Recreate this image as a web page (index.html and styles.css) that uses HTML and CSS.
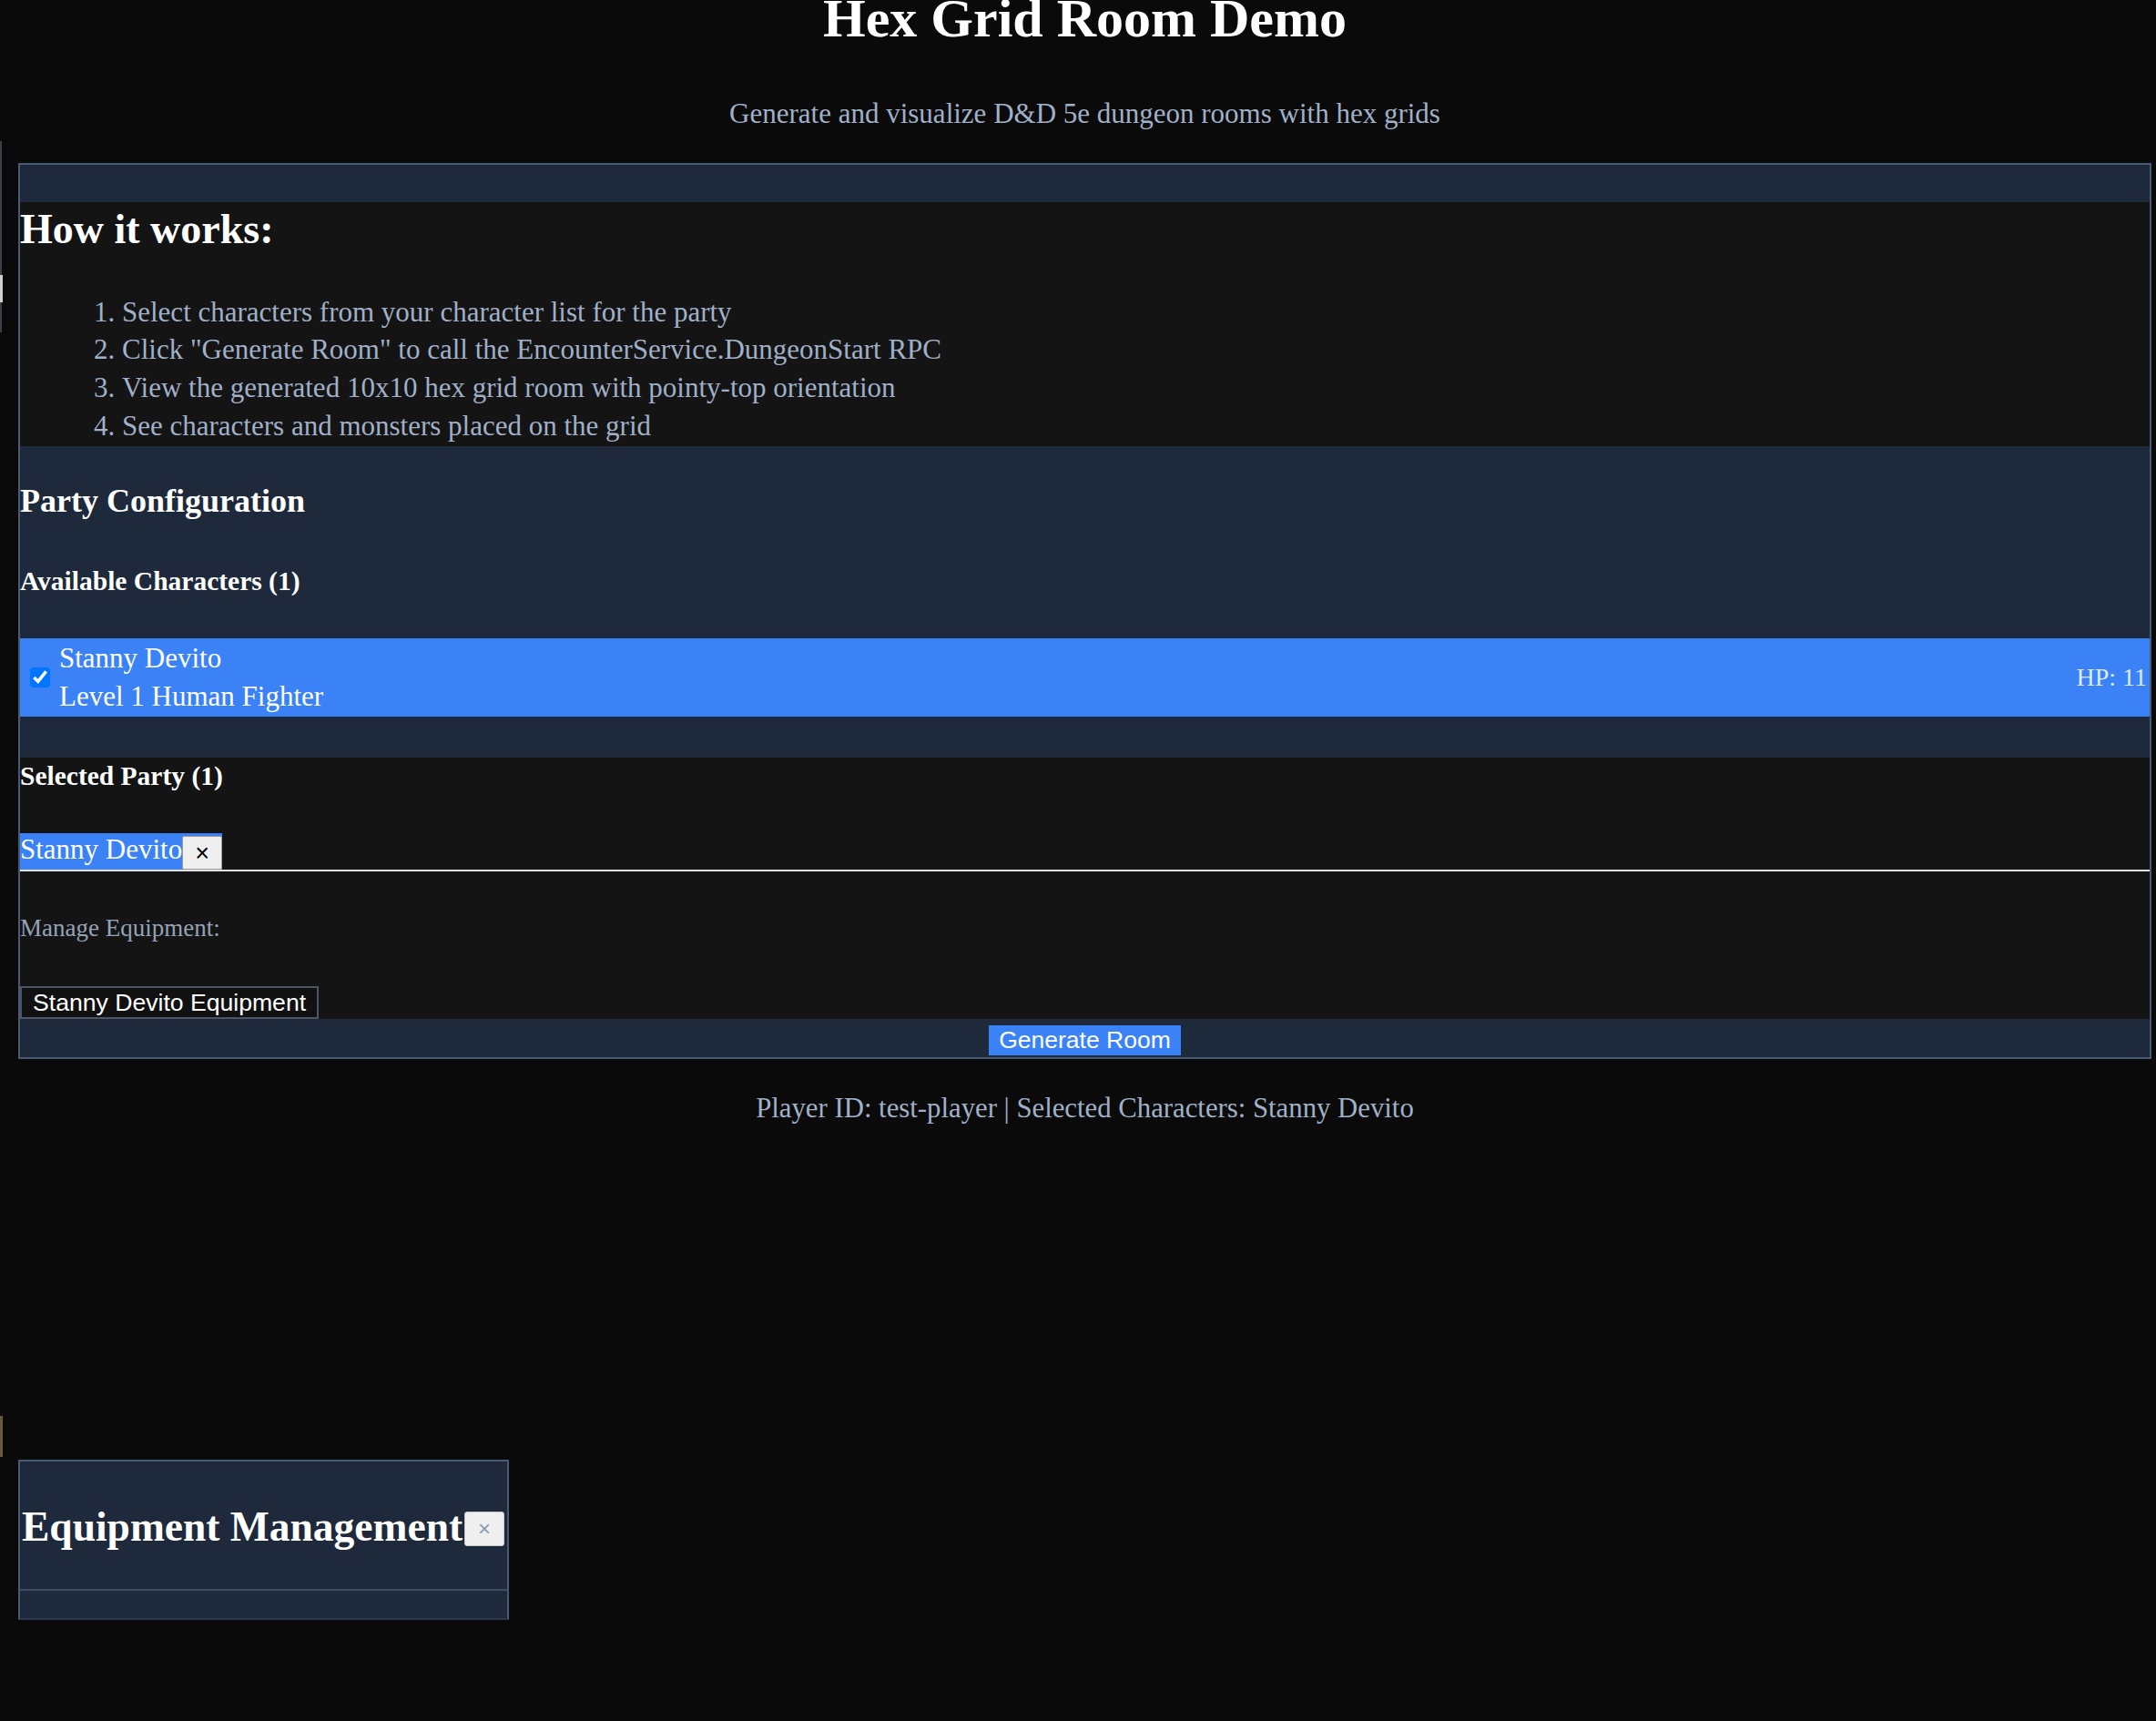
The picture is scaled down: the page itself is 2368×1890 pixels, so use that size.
FILE: index.html
```html
<!DOCTYPE html>
<html lang="en">
<head>
<meta charset="utf-8">
<title>Hex Grid Room Demo</title>
<link rel="stylesheet" href="styles.css">
</head>
<body>
<div class="edge edge-a"></div>
<div class="edge edge-b"></div>
<div class="edge edge-c"></div>
<div class="page">
  <header class="hero">
    <h1 class="title">Hex Grid Room Demo</h1>
    <p class="subtitle">Generate and visualize D&amp;D 5e dungeon rooms with hex grids</p>
  </header>

  <section class="panel">
    <div class="panel-top"></div>

    <div class="how">
      <h2 class="how-title">How it works:</h2>
      <ol class="steps">
        <li>Select characters from your character list for the party</li>
        <li>Click "Generate Room" to call the EncounterService.DungeonStart RPC</li>
        <li>View the generated 10x10 hex grid room with pointy-top orientation</li>
        <li>See characters and monsters placed on the grid</li>
      </ol>
    </div>

    <div class="party">
      <h3 class="party-title">Party Configuration</h3>
      <h4 class="sub-title">Available Characters (1)</h4>
      <label class="char-row">
        <input type="checkbox" class="char-check" checked>
        <span class="char-info">
          <span class="char-name">Stanny Devito</span>
          <span class="char-desc">Level 1 Human Fighter</span>
        </span>
        <span class="char-hp">HP: 11</span>
      </label>
    </div>

    <div class="selected">
      <h4 class="sub-title selected-title">Selected Party (1)</h4>
      <div class="chips">
        <span class="chip"><span class="chip-name">Stanny Devito</span><button class="chip-remove">×</button></span>
      </div>
      <p class="manage-label">Manage Equipment:</p>
      <button class="equip-btn">Stanny Devito Equipment</button>
    </div>

    <div class="actions">
      <button class="generate-btn">Generate Room</button>
    </div>
  </section>

  <p class="status">Player ID: test-player | Selected Characters: Stanny Devito</p>

  <div class="room-area"></div>

  <div class="modal">
    <div class="modal-header">
      <h2 class="modal-title">Equipment Management</h2>
      <button class="modal-close">×</button>
    </div>
    <div class="modal-body"></div>
  </div>
</div>
</body>
</html>
```

FILE: styles.css
```css
html, body {
  margin: 0;
  padding: 0;
  background: #0a0a0a;
}

body {
  font-family: "Liberation Serif", "Times New Roman", serif;
  color: #ffffff;
  height: 1890px;
  overflow: hidden;
  position: relative;
}

.edge {
  position: absolute;
  left: 0;
}
.edge-a { top: 155px; width: 2px; height: 210px; background: #3a3f48; }
.edge-b { top: 302px; width: 3px; height: 30px; background: #cfcfcf; }
.edge-c { top: 1555px; width: 3px; height: 45px; background: #6b5a3a; }

.page {
  margin-left: 20px;
  width: 2343px;
}

.hero {
  text-align: center;
}

.title {
  margin: 0;
  font-size: 60px;
  line-height: 40px;
  font-weight: 700;
  color: #ffffff;
}

.subtitle {
  margin: 63.5px 0 0;
  font-size: 31px;
  line-height: 42px;
  color: #a0b0c8;
}

.panel {
  margin-top: 33.5px;
  border: 2px solid #4a5a72;
  background: #1e293b;
}

.panel-top {
  height: 41px;
  background: #1e293b;
}

.how {
  background: #141414;
  padding: 2px 0 1.6px;
}

.how-title {
  margin: 0;
  font-size: 46px;
  line-height: 56px;
  font-weight: 700;
}

.steps {
  margin: 41.7px 0 0;
  padding: 0 0 0 81px;
  list-style-position: inside;
  font-size: 31px;
  line-height: 41.67px;
  color: #a0b0c8;
}

.party {
  background: #1e293b;
  padding: 37.85px 0 45px;
}

.party-title {
  margin: 0;
  font-size: 36px;
  line-height: 44px;
  font-weight: 700;
}

.sub-title {
  margin: 49.2px 0 0;
  font-size: 29.5px;
  line-height: 35px;
  font-weight: 700;
}

.char-row {
  margin-top: 45px;
  display: flex;
  align-items: center;
  background: #3b82f6;
  padding: 1px 3px 1px 11px;
  cursor: pointer;
}

.char-check {
  width: 22px;
  height: 22px;
  margin: 0 10px 0 0;
  flex: none;
}

.char-info {
  display: flex;
  flex-direction: column;
  flex: 1;
  font-size: 31px;
  line-height: 42px;
  color: #ffffff;
}

.char-hp {
  font-size: 28px;
  color: #dbeafe;
}

.selected {
  background: #141414;
  padding: 3px 0 0;
}

.selected-title {
  margin-top: 0;
}

.chips {
  margin-top: 45px;
  display: flex;
  border-bottom: 2px solid #e2e2e2;
}

.chip {
  display: flex;
  align-items: flex-start;
  height: 40px;
  background: #3b82f6;
}

.chip-name {
  font-size: 31px;
  line-height: 35px;
  color: #ffffff;
  white-space: nowrap;
}

.chip-remove {
  margin-top: 3px;
  width: 44px;
  height: 37px;
  padding: 0;
  background: #efefef;
  border: 1px solid #9a9a9a;
  border-radius: 2px;
  font-family: "Liberation Sans", Arial, sans-serif;
  font-size: 27px;
  line-height: 30px;
  color: #000000;
}

.manage-label {
  margin: 46.2px 0 0;
  font-size: 27px;
  line-height: 32px;
  color: #94a3b8;
}

.equip-btn {
  display: block;
  margin-top: 47.8px;
  height: 36px;
  padding: 0 12px;
  background: #111111;
  border: 2px solid #4b5563;
  font-family: "Liberation Sans", Arial, sans-serif;
  font-size: 26.6px;
  line-height: 30px;
  color: #ffffff;
}

.actions {
  display: flex;
  justify-content: center;
  padding: 7px 0 2px;
  background: #1e293b;
}

.generate-btn {
  height: 33px;
  padding: 0 11.5px;
  background: #3b82f6;
  border: none;
  font-family: "Liberation Sans", Arial, sans-serif;
  font-size: 26.5px;
  line-height: 33px;
  color: #ffffff;
}

.status {
  margin: 33.5px 0 0;
  text-align: center;
  font-size: 30.75px;
  line-height: 42px;
  color: #a0b0c8;
}

.room-area {
  height: 364.5px;
}

.modal {
  width: fit-content;
  height: 176px;
  box-sizing: border-box;
  overflow: hidden;
  background: #1e293b;
  border: 2px solid #4a5a72;
  border-bottom-color: #2c3850;
}

.modal-header {
  display: flex;
  align-items: center;
  gap: 2px;
  height: 142px;
  box-sizing: border-box;
  padding: 0 3px 0 2px;
  border-bottom: 2px solid #3e4c63;
}

.modal-title {
  margin: 4px 0 0;
  font-size: 45.5px;
  line-height: 56px;
  font-weight: 700;
  white-space: nowrap;
}

.modal-close {
  width: 44px;
  height: 38px;
  padding: 0;
  margin-top: 8px;
  background: #efefef;
  border: 1px solid #c8c8c8;
  border-radius: 3px;
  font-family: "Liberation Sans", Arial, sans-serif;
  font-size: 24px;
  color: #8a9bb5;
}

.modal-body {
  height: 30px;
}
```
